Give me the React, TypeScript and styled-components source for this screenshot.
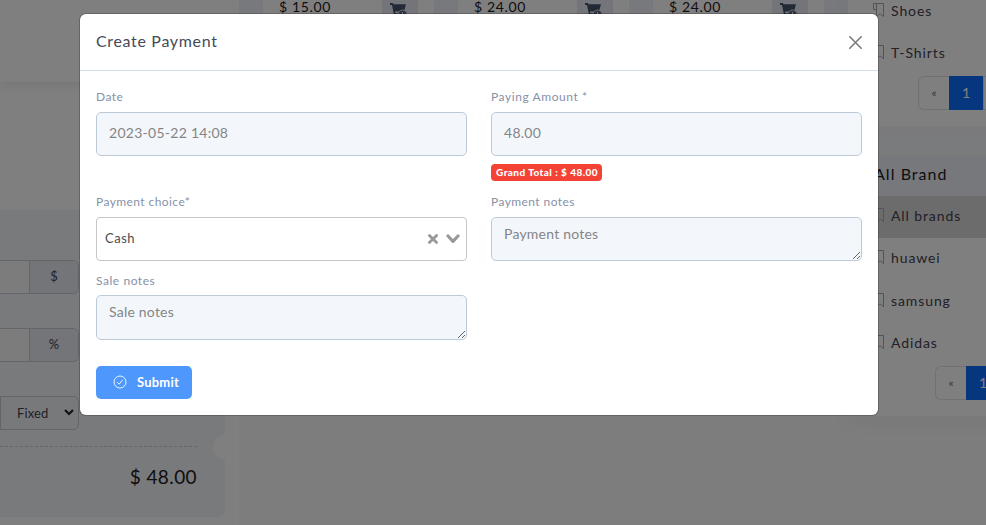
import React from "react";
import styled, { createGlobalStyle } from "styled-components";

const GlobalStyle = createGlobalStyle`
  * { box-sizing: border-box; }
  body { margin: 0; background: #fafafb; font-family: Lato, "Open Sans", sans-serif; color: #47404f; }
  input, textarea, button { font-family: inherit; margin: 0; }
`;

const Screen = styled.div`
  position: relative;
  width: 986px;
  height: 525px;
  overflow: hidden;
`;

/* ---------- page behind the dialog ---------- */

const Page = styled.div`
  display: grid;
  grid-template-columns: 239px 609px 200px;
  width: 1048px;
  height: 525px;
  background: #fafafb;
`;

const OrderColumn = styled.section`
  display: flex;
  flex-direction: column;
  background: #fff;
`;

const OrderHeader = styled.div`
  height: 82px;
  flex: none;
  box-shadow: 0 4px 12px rgba(0, 0, 0, 0.08);
`;

const TotalsCard = styled.div`
  position: relative;
  width: 225px;
  height: 307px;
  margin-top: 128px;
  padding-top: 50px;
  background: #f3f5f8;
  border-radius: 0 0 6px 0;
  overflow: hidden;
`;

const Group = styled.div`
  display: flex;
  width: 79px;
  height: 34px;
  margin-bottom: 34px;
  border: 1px solid #c5cad4;
  border-left: 0;
  border-radius: 0 6px 6px 0;
  overflow: hidden;
`;

const GroupInput = styled.div`
  width: 29px;
  background: #f8f9fb;
`;

const Addon = styled.div`
  flex: 1;
  display: flex;
  align-items: center;
  justify-content: center;
  padding-bottom: 3px;
  border-left: 1px solid #c5cad4;
  background: #e8ebf2;
  font-size: 13px;
`;

const SelectBox = styled.div`
  display: flex;
  align-items: center;
  justify-content: space-between;
  width: 79px;
  height: 34px;
  padding: 0 4px 1px 16px;
  border: 1px solid #c5cad4;
  border-radius: 0 6px 6px 0;
  background: #f1f3f7;
  font-size: 13px;
  letter-spacing: 0.1px;
`;

const Dashes = styled.div`
  width: 197px;
  margin-top: 16px;
  border-top: 1px dashed #c8ccd3;
`;

const Notch = styled.div`
  position: absolute;
  left: 213px;
  top: 225px;
  width: 24px;
  height: 24px;
  border-radius: 50%;
  background: #fff;
`;

const GrandTotal = styled.div`
  width: 197px;
  margin-top: 19px;
  text-align: right;
  font-size: 19px;
  line-height: 22px;
  letter-spacing: 0.4px;
  color: #1d1a25;
`;

const Products = styled.section`
  display: grid;
  grid-template-columns: repeat(3, 171px);
  column-gap: 24px;
  height: 40px;
  padding: 0 24px;
  background: #f0f2f8;
`;

const Product = styled.article`
  display: flex;
  justify-content: space-between;
  padding: 0 16px;
  background: #fff;
`;

const Price = styled.span`
  font-size: 14px;
  line-height: 13px;
  letter-spacing: 0.65px;
  color: #1d1a25;
`;

const CartButton = styled.div`
  display: flex;
  justify-content: center;
  width: 36px;
  height: 30px;
  padding: 2px 2px 0 0;
  background: #e7eaf4;
`;

const Sidebar = styled.aside`
  display: flex;
  flex-direction: column;
`;

const SideCard = styled.div<{ $height: number }>`
  height: ${(p) => p.$height}px;
  background: #fff;
  box-shadow: 0 4px 20px rgba(20, 40, 60, 0.05);
  overflow: hidden;
`;

const SideGap = styled.div`
  height: 30px;
  background: linear-gradient(#f3f4f7, #f8f9fb);
`;

const SideTitle = styled.h3`
  height: 40px;
  margin: 0;
  padding-left: 26px;
  background: #eff1f8;
  font-size: 16px;
  font-weight: 400;
  line-height: 36px;
  letter-spacing: 1.05px;
  color: #1d1a25;
`;

const SideItem = styled.div<{ $active?: boolean }>`
  display: flex;
  align-items: center;
  gap: 6px;
  height: 42.3px;
  padding: 0 0 3px 26px;
  background: ${(p) => (p.$active ? "#d8d8d8" : "transparent")};
  font-size: 14px;
  letter-spacing: 0.9px;
  svg { flex: none; overflow: visible; }
`;

const FirstList = styled.div`
  margin-top: -9px;
`;

const Pager = styled.div<{ $left: number; $top: number }>`
  display: flex;
  height: 34px;
  margin: ${(p) => p.$top}px 0 0 ${(p) => p.$left}px;
`;

const PageLink = styled.span<{ $kind: "edge" | "current" }>`
  flex: none;
  display: flex;
  align-items: center;
  justify-content: center;
  width: ${(p) => (p.$kind === "edge" ? 31 : 34)}px;
  padding-bottom: 1px;
  font-size: ${(p) => (p.$kind === "edge" ? 12 : 14)}px;
  border: ${(p) => (p.$kind === "edge" ? "1px solid #dee2e6" : "0")};
  color: ${(p) => (p.$kind === "edge" ? "#6c757d" : "#fff")};
  background: ${(p) => (p.$kind === "edge" ? "#fff" : "#0d6efd")};
  &:first-child { border-right: 0; border-radius: 6px 0 0 6px; }
`;

/* ---------- dialog ---------- */

const Backdrop = styled.div`
  position: absolute;
  inset: 0;
  padding: 14px 0 0 80px;
  background: rgba(0, 0, 0, 0.5);
`;

const Dialog = styled.div`
  width: 798px;
  height: 401px;
  background: #fff;
  border-radius: 6px;
  box-shadow: 0 0 0 1px rgba(0, 0, 0, 0.2);
`;

const DialogHeader = styled.header`
  display: flex;
  align-items: center;
  justify-content: space-between;
  height: 57px;
  padding: 0 16px;
  border-bottom: 1px solid #d5dde6;
`;

const DialogTitle = styled.h2`
  margin: -3px 0 0;
  font-size: 16px;
  font-weight: 400;
  letter-spacing: 0.67px;
  color: #464a57;
`;

const CloseButton = styled.button`
  display: flex;
  padding: 0;
  border: 0;
  background: none;
`;

const Form = styled.form`
  display: grid;
  grid-template-columns: 371px 371px;
  grid-template-rows: 105px 79px 94px 33px;
  column-gap: 24px;
  align-items: start;
  height: 344px;
  align-content: start;
  padding: 17px 16px 0;
`;

const Field = styled.div`
  display: flex;
  flex-direction: column;
  align-items: flex-start;
`;

const Label = styled.label<{ $gap?: number; $spacing?: number }>`
  height: 20px;
  margin-bottom: ${(p) => p.$gap ?? 4}px;
  font-size: 12px;
  line-height: 17px;
  letter-spacing: ${(p) => p.$spacing ?? 0.42}px;
  color: #8791a8;
`;

const Input = styled.input`
  width: 371px;
  height: 44px;
  padding: 0 12px 3px;
  border: 1px solid #bccad8;
  border-radius: 5px;
  outline: 0;
  background: #f3f7fc;
  font-size: 14px;
  letter-spacing: 0.27px;
  color: #858585;
`;

const TextArea = styled.textarea<{ $height: number }>`
  width: 371px;
  height: ${(p) => p.$height}px;
  padding: 5px 12px;
  border: 1px solid #bccad8;
  border-radius: 5px;
  outline: 0;
  background: #f3f7fc;
  font-size: 14px;
  line-height: 21px;
  letter-spacing: 0.22px;
  overflow: hidden;
  &::placeholder { color: #858585; }
`;

const Choice = styled.div`
  display: flex;
  align-items: center;
  width: 371px;
  height: 44px;
  padding: 0 6px 0 8px;
  border: 1px solid #c6c6c6;
  border-radius: 4px;
`;

const ChoiceValue = styled.span`
  flex: 1;
  margin-top: -3px;
  font-size: 13px;
  letter-spacing: 0.5px;
  color: #4c4c4c;
`;

const Clear = styled.svg`
  margin-right: 7px;
`;

const Badge = styled.span`
  height: 17px;
  margin-top: 8px;
  padding: 0 4.5px 0 5px;
  border-radius: 4px;
  background: #f44336;
  color: #fff;
  font-size: 10px;
  font-weight: 900;
  line-height: 17px;
  letter-spacing: 0.45px;
  white-space: nowrap;
`;

const Submit = styled.button`
  display: flex;
  align-items: center;
  width: 96px;
  height: 33px;
  padding: 0 0 2px 17px;
  border: 0;
  border-radius: 5px;
  background: #4e97fd;
  color: #fff;
  font-size: 13px;
  font-weight: 700;
  letter-spacing: 0.2px;
  svg { flex: none; margin-right: 10px; }
`;

const CartIcon = () => (
  <svg width="20" height="17" viewBox="0 0 20 17">
    <path d="M1 1h3l.6 1.2H17l-2 7.3H6l.3 1.7H13V13H5L3 3H1z" fill="#48546a" />
    <circle cx="13.5" cy="12.5" r="4.5" fill="#5f6a80" stroke="#d5d9e4" />
    <path d="M13.5 10v5M11 12.5h5" stroke="#fff" />
  </svg>
);

const BookmarkIcon = ({ flap }: { flap?: boolean }) => (
  <svg width="11" height="15" viewBox="0 0 11 15" fill="none" stroke="#aaa7b4">
    <path d="M2.5.5h7v13L6 10.8 2.5 13.5z" />
    {flap && <path d="M2.5.5H-.5v6h3" />}
  </svg>
);

const Item = ({ name, active, flap }: { name: string; active?: boolean; flap?: boolean }) => (
  <SideItem $active={active}>
    <BookmarkIcon flap={flap} />
    {name}
  </SideItem>
);

const Pagination = ({ left, top }: { left: number; top: number }) => (
  <Pager $left={left} $top={top}>
    <PageLink $kind="edge">«</PageLink>
    <PageLink $kind="current">1</PageLink>
    <PageLink $kind="edge">»</PageLink>
  </Pager>
);

export default function App() {
  return (
    <Screen>
      <GlobalStyle />
      <Page>
        <OrderColumn>
          <OrderHeader />
          <TotalsCard>
            <Group><GroupInput /><Addon>$</Addon></Group>
            <Group><GroupInput /><Addon>%</Addon></Group>
            <SelectBox>
              Fixed
              <svg width="10" height="7" viewBox="0 0 10 7" fill="none" stroke="#22252c" strokeWidth="2.2">
                <path d="M1 1l4 4 4-4" />
              </svg>
            </SelectBox>
            <Dashes />
            <GrandTotal>$ 48.00</GrandTotal>
            <Notch />
          </TotalsCard>
        </OrderColumn>
        <Products>
          {["$ 15.00", "$ 24.00", "$ 24.00"].map((price, i) => (
            <Product key={i}>
              <Price>{price}</Price>
              <CartButton><CartIcon /></CartButton>
            </Product>
          ))}
        </Products>
        <Sidebar>
          <SideCard $height={126}>
            <FirstList>
              <Item name="Shoes" flap />
              <Item name="T-Shirts" />
            </FirstList>
            <Pagination left={70} top={0} />
          </SideCard>
          <SideGap />
          <SideCard $height={260}>
            <SideTitle>All Brand</SideTitle>
            <Item name="All brands" active />
            <Item name="huawei" />
            <Item name="samsung" />
            <Item name="Adidas" />
            <Pagination left={87} top={1} />
          </SideCard>
        </Sidebar>
      </Page>
      <Backdrop>
        <Dialog>
          <DialogHeader>
            <DialogTitle>Create Payment</DialogTitle>
            <CloseButton type="button" aria-label="Close">
              <svg width="13" height="13" viewBox="0 0 13 13" stroke="#7c7c7c" strokeWidth="1.6" strokeLinecap="round">
                <path d="M.8.8l11.4 11.4M12.2.8L.8 12.2" />
              </svg>
            </CloseButton>
          </DialogHeader>
          <Form>
            <Field>
              <Label>Date</Label>
              <Input defaultValue="2023-05-22 14:08" />
            </Field>
            <Field>
              <Label $spacing={0.58}>Paying Amount *</Label>
              <Input defaultValue="48.00" />
              <Badge>Grand Total : $ 48.00</Badge>
            </Field>
            <Field>
              <Label>Payment choice*</Label>
              <Choice>
                <ChoiceValue>Cash</ChoiceValue>
                <Clear width="12" height="12" viewBox="0 0 12 12" stroke="#999" strokeWidth="2.8" strokeLinecap="round">
                  <path d="M2.4 2.4l7.2 7.2M9.6 2.4l-7.2 7.2" />
                </Clear>
                <svg width="14" height="10" viewBox="0 0 14 10" fill="none" stroke="#999" strokeWidth="3.2" strokeLinecap="round" strokeLinejoin="round">
                  <path d="M2 2l5 5.4L12 2" />
                </svg>
              </Choice>
            </Field>
            <Field>
              <Label>Payment notes</Label>
              <TextArea $height={44} placeholder="Payment notes" />
            </Field>
            <Field>
              <Label $gap={3} $spacing={0.55}>Sale notes</Label>
              <TextArea $height={45} placeholder="Sale notes" />
            </Field>
            <span />
            <Submit type="button">
              <svg width="14" height="14" viewBox="0 0 14 14" fill="none" stroke="#fff" strokeWidth="0.9">
                <circle cx="7" cy="7" r="6" />
                <path d="M4.2 7.2l2 2 3.5-4.4" />
              </svg>
              Submit
            </Submit>
          </Form>
        </Dialog>
      </Backdrop>
    </Screen>
  );
}
